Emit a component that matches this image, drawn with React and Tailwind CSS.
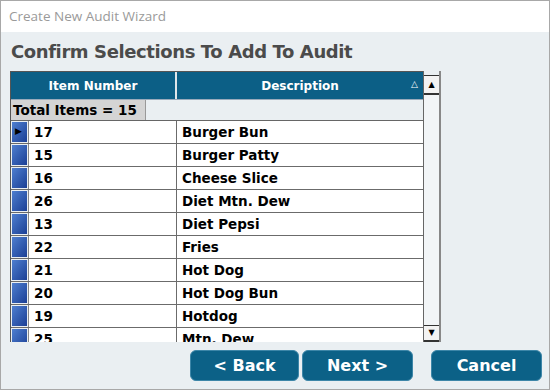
import React from "react";

const rows = [
  ["17", "Burger Bun"],
  ["15", "Burger Patty"],
  ["16", "Cheese Slice"],
  ["26", "Diet Mtn. Dew"],
  ["13", "Diet Pepsi"],
  ["22", "Fries"],
  ["21", "Hot Dog"],
  ["20", "Hot Dog Bun"],
  ["19", "Hotdog"],
  ["25", "Mtn. Dew"],
];

const font = { fontFamily: '"DejaVu Sans", Verdana, sans-serif' };

function Btn({ children, className = "" }) {
  return (
    <button className={`h-[31px] rounded-[6px] bg-[#0c6187] border border-[#3d86a8] text-white font-bold text-[16px] ${className}`}>
      {children}
    </button>
  );
}

export default function App() {
  return (
    <div className="w-[550px] h-[390px] bg-[#eaeff2] border border-[#a8a8a8] flex flex-col overflow-hidden" style={font}>
      <div className="h-[31px] bg-white flex items-center pl-[8px] shrink-0">
        <span className="text-[13.5px] text-[#9a9a9a]" style={{ fontFamily: '"Open Sans", "Noto Sans", sans-serif' }}>Create New Audit Wizard</span>
      </div>

      <h1 className="text-[18px] font-bold text-[#4b4b4b] ml-[10px] mt-[7px] leading-[26px] tracking-[-0.4px]">
        Confirm Selections To Add To Audit
      </h1>

      <div className="flex ml-[9px] mt-[6px] h-[271px]">
        <div className="w-[413px] border-l border-t border-[#555] flex flex-col overflow-hidden">
          <div className="flex h-[28px] shrink-0 bg-[#0c5f86] text-white text-[12px] font-bold border-b border-[#9ab]">
            <div className="w-[166px] flex items-center justify-center border-r-2 border-[#dfe6ea]">Item Number</div>
            <div className="flex-1 flex items-center justify-center relative">
              Description
              <span className="absolute right-[5px] top-[6px] text-[9px]">△</span>
            </div>
          </div>
          <div className="h-[21px] shrink-0 flex border-b border-[#666]">
            <div className="w-[135px] bg-[#d4d4d4] border-r border-[#999] flex items-center pl-[2px] text-[13.5px] font-bold text-black whitespace-nowrap">Total Items = 15</div>
          </div>
          {rows.map(([n, d], i) => (
            <div key={n} className="h-[23px] shrink-0 flex bg-white border-b border-[#6b6b6b] text-[13.5px] font-bold text-black">
              <div className="w-[18px] p-[1px] border-r border-[#888] bg-[#eaeff2]">
                <div className="h-full bg-gradient-to-br from-[#4f7fd0] to-[#1c3f95] flex items-center">
                  {i === 0 && <span className="text-[9px] text-black ml-[3px]">▶</span>}
                </div>
              </div>
              <div className="w-[148px] flex items-center pl-[5px] border-r border-[#6b6b6b]">{n}</div>
              <div className="flex-1 flex items-center pl-[5px]">{d}</div>
            </div>
          ))}
        </div>
        <div className="w-[18px] flex flex-col border-l border-[#666] border-r-2 border-r-[#888] bg-[#f2f5f7]">
          <div className="h-[5px] border-b border-[#333] bg-[#eaeff2]" />
          <div className="h-[19px] bg-[#f3f3f3] border-b-2 border-[#333] flex items-center justify-center text-[8px] text-black">▲</div>
          <div className="flex-1" />
          <div className="h-[17px] bg-[#f3f3f3] border-t border-[#333] border-b-2 flex items-center justify-center text-[8px] text-black">▼</div>
        </div>
      </div>

      <div className="flex mt-[8px] ml-[189px]">
        <Btn className="w-[109px]">&lt; Back</Btn>
        <Btn className="w-[111px] ml-[3px]">Next &gt;</Btn>
        <Btn className="w-[111px] ml-[18px]">Cancel</Btn>
      </div>
    </div>
  );
}
